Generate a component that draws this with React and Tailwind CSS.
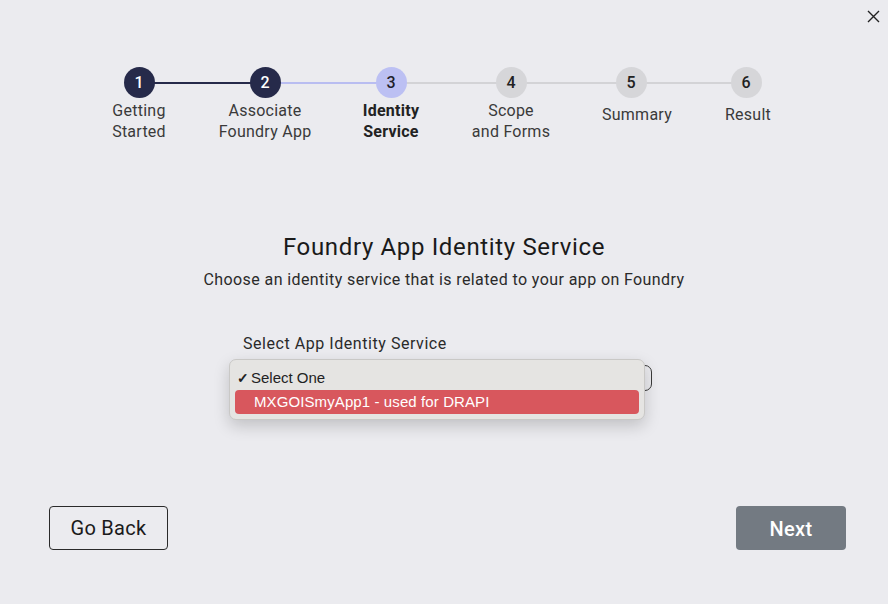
import React from "react";

const steps = [
  { n: 1, label: ["Getting", "Started"], w: "w-[126px]", state: "done", nudge: "" },
  { n: 2, label: ["Associate", "Foundry App"], w: "w-[126px]", state: "done", nudge: "" },
  { n: 3, label: ["Identity", "Service"], w: "w-[126px]", state: "current", nudge: "" },
  { n: 4, label: ["Scope", "and Forms"], w: "w-[114px]", state: "todo", nudge: "" },
  { n: 5, label: ["Summary"], w: "w-[126px]", state: "todo", nudge: "pl-[12px]" },
  { n: 6, label: ["Result"], w: "w-[104px]", state: "todo", nudge: "pl-[4px]" },
];

/* colour of the segment that leaves step i to the right */
const segColor = ["bg-[#262a4a]", "bg-[#b9bdf1]", "bg-[#d3d3d6]", "bg-[#d3d3d6]", "bg-[#d3d3d6]"];

const circleColor = {
  done: "bg-[#262a4a] text-white",
  current: "bg-[#bcc0f3] text-[#1f1f2b]",
  todo: "bg-[#d6d6d9] text-[#222]",
};

function Stepper() {
  return (
    <div className="flex pl-[76px]">
      {steps.map((s, i) => (
        <div key={s.n} className={`${s.w} flex flex-col items-center shrink-0`}>
          <div className="relative w-full h-[31px] flex justify-center">
            {i > 0 && (
              <div className={`absolute left-0 top-[15px] h-[2px] w-1/2 ${segColor[i - 1]}`} />
            )}
            {i < steps.length - 1 && (
              <div className={`absolute right-0 top-[15px] h-[2px] w-1/2 ${segColor[i]}`} />
            )}
            <div
              className={`relative z-10 w-[31px] h-[31px] rounded-full flex items-center justify-center text-[16px] font-medium ${circleColor[s.state]}`}
            >
              {s.n}
            </div>
          </div>
          <div
            className={`mt-[2px] text-center text-[16px] leading-[21px] tracking-[0.25px] ${
              s.state === "current" ? "font-bold text-[#222]" : "text-[#3a3a3a]"
            } ${s.label.length === 1 ? "pt-[4px]" : ""} ${s.nudge}`}
          >
            {s.label.map((l) => (
              <div key={l} className="whitespace-nowrap">{l}</div>
            ))}
          </div>
        </div>
      ))}
    </div>
  );
}

export default function App() {
  return (
    <div
      className="relative w-full h-[604px] bg-[#ebebef] flex flex-col text-[#1e1e1e]"
      style={{ fontFamily: "Roboto, 'Noto Sans', sans-serif" }}
    >
      {/* close */}
      <button className="absolute right-[8px] top-[9px] w-[14px] h-[14px] flex items-center justify-center">
        <svg width="13" height="13" viewBox="0 0 13 13">
          <path d="M1 1 L12 12 M12 1 L1 12" stroke="#222" strokeWidth="1.4" />
        </svg>
      </button>

      <div className="pt-[67px]">
        <Stepper />
      </div>

      <div className="mt-[89px] flex flex-col items-center">
        <h1 className="text-[24px] leading-[32px] tracking-[0.65px] text-[#1a1a1a]">
          Foundry App Identity Service
        </h1>
        <p className="mt-[5px] text-[16px] leading-[24px] tracking-[0.4px] text-[#2a2a2a]">
          Choose an identity service that is related to your app on Foundry
        </p>
      </div>

      <div className="mt-[40px] ml-[243px] w-[409px]">
        <div className="text-[16px] leading-[24px] tracking-[0.55px] text-[#2a2a2a]">
          Select App Identity Service
        </div>
        <div className="relative mt-[9px]">
          <div className="h-[26px] w-full rounded-[7px] border border-[#3a3a3a] bg-[#ebebef]" />
          {/* open native menu */}
          <div
            className="absolute left-[-14px] top-[-6px] w-[416px] rounded-[7px] bg-[#e5e4e2] border border-[#c9c8c6] shadow-[0_6px_16px_rgba(0,0,0,0.18)] px-[5px] pt-[6px] pb-[5px]"
            style={{ fontFamily: "'Liberation Sans', Arial, sans-serif" }}
          >
            <div className="h-[24px] flex items-center text-[15px] text-[#222]">
              <span className="w-[16px] pl-[2px] text-[14px] font-bold">✓</span>
              <span>Select One</span>
            </div>
            <div className="h-[24px] flex items-center rounded-[4px] bg-[#d8575d] text-white text-[15px] font-medium pl-[19px] tracking-[0.1px]">
              MXGOISmyApp1 - used for DRAPI
            </div>
          </div>
        </div>
      </div>

      <div className="mt-auto mb-[54px] pl-[49px] pr-[42px] flex justify-between">
        <button className="w-[119px] h-[44px] rounded-[4px] border border-[#2a2a2a] text-[20px] leading-[42px] tracking-[0.3px] text-[#1a1a1a] bg-transparent">
          Go Back
        </button>
        <button className="w-[110px] h-[44px] rounded-[4px] bg-[#737a82] text-[20px] leading-[44px] pt-[1px] tracking-[0.3px] font-medium text-white">
          Next
        </button>
      </div>
    </div>
  );
}
